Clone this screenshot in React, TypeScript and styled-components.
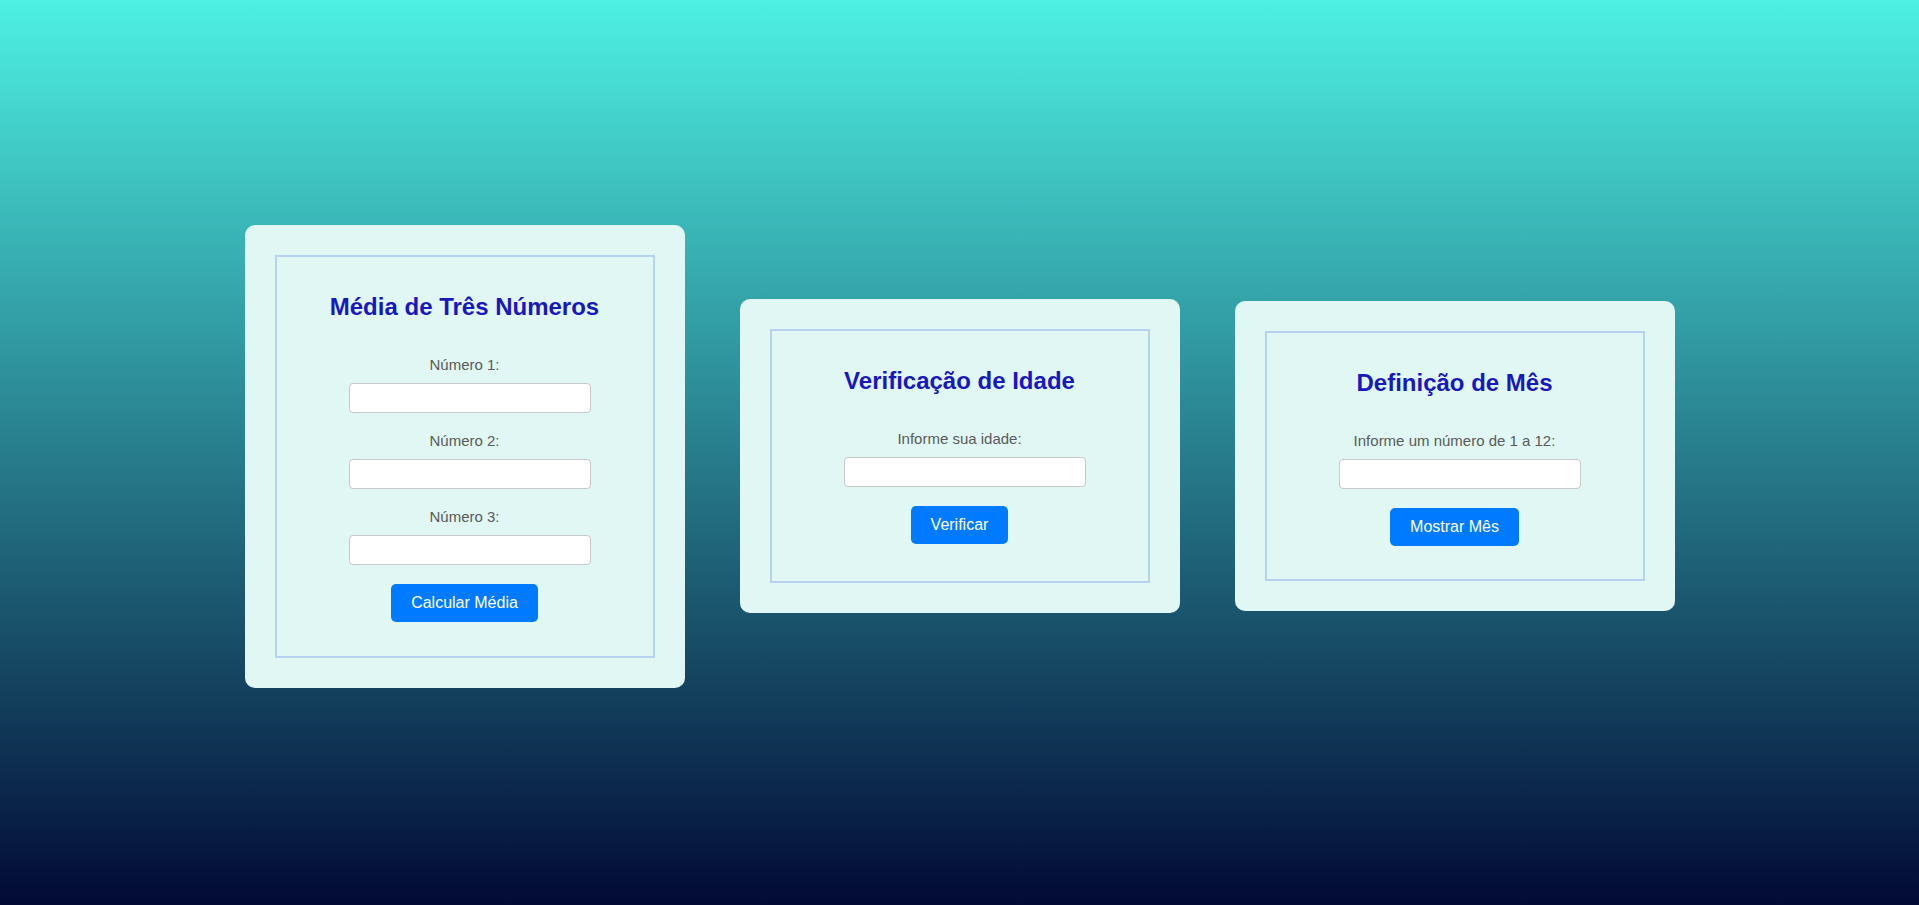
import React from "react";
import styled, { createGlobalStyle } from "styled-components";

const GlobalStyle = createGlobalStyle`
  html, body {
    margin: 0;
    padding: 0;
  }
  body {
    font-family: "Liberation Sans", Arial, sans-serif;
    background: linear-gradient(to bottom, #4df0e3 0%, #020a35 100%);
    min-height: 100vh;
  }
  * { box-sizing: border-box; }
`;

const Page = styled.main`
  min-height: 100vh;
  padding-top: 7px;
  display: flex;
  align-items: center;
  justify-content: center;
  gap: 55px;
`;

const Card = styled.section`
  width: 440px;
  padding: 30px;
  background: #e0f7f4;
  border-radius: 10px;
`;

const Frame = styled.div<{ $tail: number }>`
  border: 2px solid #b6d2ee;
  padding: 20px 20px ${(p) => 20 + p.$tail}px;
  display: flex;
  flex-direction: column;
  align-items: center;
`;

const Title = styled.h2`
  margin: 16px 0 35px;
  font-size: 24px;
  font-weight: bold;
  color: #1818bd;
  text-align: center;
`;

const Field = styled.div`
  display: flex;
  flex-direction: column;
  align-items: center;
  margin-bottom: 19px;
`;

const Label = styled.label`
  font-size: 15px;
  color: #5a5a5a;
  margin-bottom: 10px;
`;

const Input = styled.input`
  width: 242px;
  height: 30px;
  margin-left: 10px;
  border: 1px solid #c8c8c8;
  border-radius: 4px;
  background: #ffffff;
  padding: 4px 6px;
  font-family: inherit;
  font-size: 15px;
`;

const Button = styled.button`
  background: #007bff;
  color: #ffffff;
  border: none;
  border-radius: 5px;
  padding: 10px 20px;
  font-family: "Liberation Sans", Arial, sans-serif;
  font-size: 16px;
  cursor: pointer;
`;

type FormCardProps = {
  title: string;
  labels: string[];
  action: string;
  tail: number;
};

function FormCard({ title, labels, action, tail }: FormCardProps) {
  return (
    <Card>
      <Frame $tail={tail}>
        <Title>{title}</Title>
        {labels.map((l) => (
          <Field key={l}>
            <Label>{l}</Label>
            <Input type="number" />
          </Field>
        ))}
        <Button type="button">{action}</Button>
      </Frame>
    </Card>
  );
}

export default function App() {
  return (
    <>
      <GlobalStyle />
      <Page>
        <FormCard
          title="Média de Três Números"
          labels={["Número 1:", "Número 2:", "Número 3:"]}
          action="Calcular Média"
          tail={14}
        />
        <FormCard
          title="Verificação de Idade"
          labels={["Informe sua idade:"]}
          action="Verificar"
          tail={17}
        />
        <FormCard
          title="Definição de Mês"
          labels={["Informe um número de 1 a 12:"]}
          action="Mostrar Mês"
          tail={13}
        />
      </Page>
    </>
  );
}
